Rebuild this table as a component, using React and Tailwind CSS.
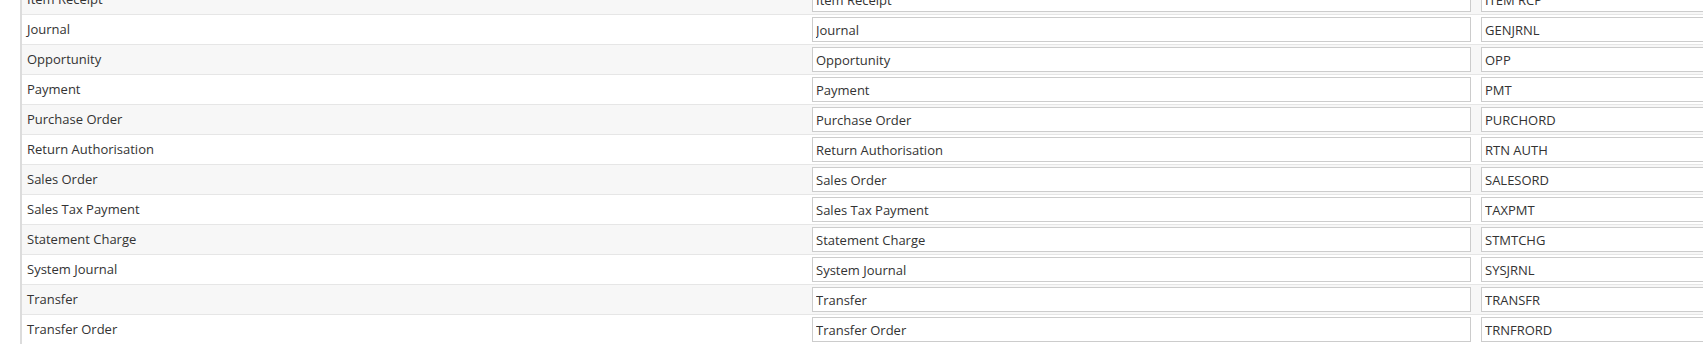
import React from "react";

const rows = [
  ["Item Receipt", "Item Receipt", "ITEM RCP"],
  ["Journal", "Journal", "GENJRNL"],
  ["Opportunity", "Opportunity", "OPP"],
  ["Payment", "Payment", "PMT"],
  ["Purchase Order", "Purchase Order", "PURCHORD"],
  ["Return Authorisation", "Return Authorisation", "RTN AUTH"],
  ["Sales Order", "Sales Order", "SALESORD"],
  ["Sales Tax Payment", "Sales Tax Payment", "TAXPMT"],
  ["Statement Charge", "Statement Charge", "STMTCHG"],
  ["System Journal", "System Journal", "SYSJRNL"],
  ["Transfer", "Transfer", "TRANSFR"],
  ["Transfer Order", "Transfer Order", "TRNFRORD"],
];

export default function App() {
  return (
    <div
      className="w-[1703px] h-[344px] overflow-hidden bg-white text-[#333]"
      style={{ fontFamily: '"Open Sans", "Liberation Sans", sans-serif' }}
    >
      <div className="ml-[20px] mt-[-15px] w-[1900px] border-l-2 border-[#dcdcdc]">
        {rows.map(([label, name, abbr], i) => (
          <div
            key={label}
            className={`flex h-[30px] border-b border-[#e6e6e6] ${
              i % 2 === 0 ? "bg-[#f7f7f7]" : "bg-white"
            }`}
          >
            <div className="w-[790px] shrink-0 pl-[5px] pt-[5px] text-[13px] leading-[18px]">
              {label}
            </div>
            <div className="shrink-0 pt-[2px]">
              <input
                readOnly
                value={name}
                className="block w-[659px] h-[25px] border border-[#cccccc] bg-white px-[3px] text-[13px] text-[#333] outline-none"
                style={{ fontFamily: '"Open Sans", "Liberation Sans", sans-serif' }}
              />
            </div>
            <div className="shrink-0 pt-[2px] pl-[10px]">
              <input
                readOnly
                value={abbr}
                className="block w-[400px] h-[25px] border border-[#cccccc] bg-white px-[3px] text-[13px] text-[#333] outline-none"
                style={{ fontFamily: '"Open Sans", "Liberation Sans", sans-serif' }}
              />
            </div>
          </div>
        ))}
      </div>
    </div>
  );
}
